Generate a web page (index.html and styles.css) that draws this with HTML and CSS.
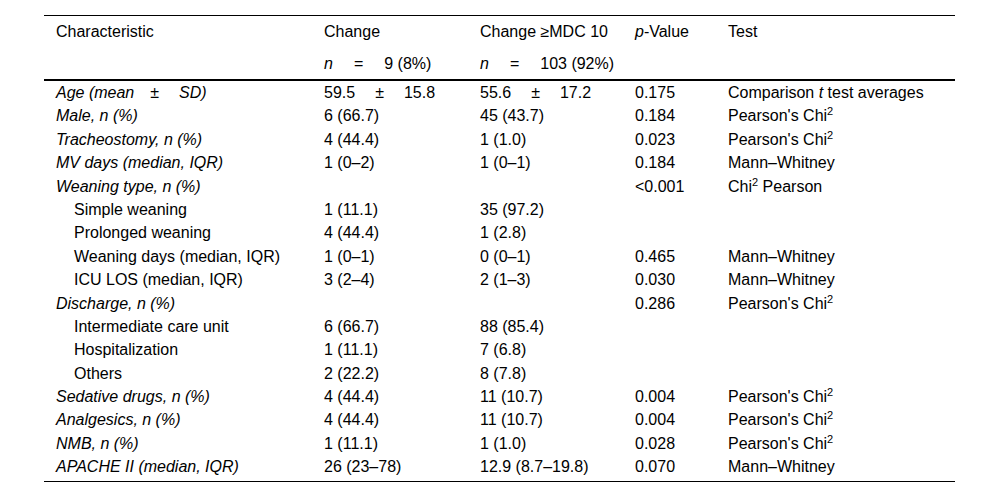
FILE: index.html
```html
<!DOCTYPE html>
<html lang="en">
<head>
<meta charset="utf-8">
<title>Characteristics table</title>
<link rel="stylesheet" href="styles.css">
</head>
<body>
<table class="data">
  <colgroup>
    <col class="c1"><col class="c2"><col class="c3"><col class="c4"><col class="c5">
  </colgroup>
  <thead>
    <tr class="h1">
      <th>Characteristic</th>
      <th>Change</th>
      <th>Change ≥MDC 10</th>
      <th><i>p</i>-Value</th>
      <th>Test</th>
    </tr>
    <tr class="h2">
      <th></th>
      <th><i>n</i><span class="eq">=</span>9 (8%)</th>
      <th><i>n</i><span class="eq">=</span>103 (92%)</th>
      <th></th>
      <th></th>
    </tr>
  </thead>
  <tbody>
    <tr><td class="lab">Age (mean<span class="pm1">±</span>SD)</td><td>59.5<span class="pm">±</span>15.8</td><td>55.6<span class="pm">±</span>17.2</td><td>0.175</td><td>Comparison <i>t</i> test averages</td></tr>
    <tr><td class="lab">Male, n (%)</td><td>6 (66.7)</td><td>45 (43.7)</td><td>0.184</td><td>Pearson's Chi<sup>2</sup></td></tr>
    <tr><td class="lab">Tracheostomy, n (%)</td><td>4 (44.4)</td><td>1 (1.0)</td><td>0.023</td><td>Pearson's Chi<sup>2</sup></td></tr>
    <tr><td class="lab">MV days (median, IQR)</td><td>1 (0–2)</td><td>1 (0–1)</td><td>0.184</td><td>Mann–Whitney</td></tr>
    <tr><td class="lab">Weaning type, n (%)</td><td></td><td></td><td>&lt;0.001</td><td>Chi<sup>2</sup> Pearson</td></tr>
    <tr><td class="sub">Simple weaning</td><td>1 (11.1)</td><td>35 (97.2)</td><td></td><td></td></tr>
    <tr><td class="sub">Prolonged weaning</td><td>4 (44.4)</td><td>1 (2.8)</td><td></td><td></td></tr>
    <tr><td class="sub">Weaning days (median, IQR)</td><td>1 (0–1)</td><td>0 (0–1)</td><td>0.465</td><td>Mann–Whitney</td></tr>
    <tr><td class="sub">ICU LOS (median, IQR)</td><td>3 (2–4)</td><td>2 (1–3)</td><td>0.030</td><td>Mann–Whitney</td></tr>
    <tr><td class="lab">Discharge, n (%)</td><td></td><td></td><td>0.286</td><td>Pearson's Chi<sup>2</sup></td></tr>
    <tr><td class="sub">Intermediate care unit</td><td>6 (66.7)</td><td>88 (85.4)</td><td></td><td></td></tr>
    <tr><td class="sub">Hospitalization</td><td>1 (11.1)</td><td>7 (6.8)</td><td></td><td></td></tr>
    <tr><td class="sub">Others</td><td>2 (22.2)</td><td>8 (7.8)</td><td></td><td></td></tr>
    <tr><td class="lab">Sedative drugs, n (%)</td><td>4 (44.4)</td><td>11 (10.7)</td><td>0.004</td><td>Pearson's Chi<sup>2</sup></td></tr>
    <tr><td class="lab">Analgesics, n (%)</td><td>4 (44.4)</td><td>11 (10.7)</td><td>0.004</td><td>Pearson's Chi<sup>2</sup></td></tr>
    <tr><td class="lab">NMB, n (%)</td><td>1 (11.1)</td><td>1 (1.0)</td><td>0.028</td><td>Pearson's Chi<sup>2</sup></td></tr>
    <tr class="last"><td class="lab">APACHE II (median, IQR)</td><td>26 (23–78)</td><td>12.9 (8.7–19.8)</td><td>0.070</td><td>Mann–Whitney</td></tr>
  </tbody>
</table>
</body>
</html>
```
FILE: styles.css
```css
html, body {
  margin: 0;
  padding: 0;
  background: #fff;
}
body {
  font-family: "Liberation Sans", Arial, sans-serif;
  font-size: 16px;
  color: #000;
}
.data {
  margin: 15px 0 0 44px;
  width: 911px;
  border-collapse: collapse;
  table-layout: fixed;
  border-top: 1px solid #000;
  border-bottom: 1px solid #000;
}
.c1 { width: 268px; }
.c2 { width: 156px; }
.c3 { width: 155px; }
.c4 { width: 93px; }
.c5 { width: 239px; }
th, td {
  text-align: left;
  font-weight: normal;
  white-space: nowrap;
  padding: 3px 12px 2.4px;
  line-height: 18px;
  vertical-align: middle;
}
thead th {
  padding-top: 7px;
  padding-bottom: 6.5px;
}
.h2 th {
  border-bottom: 2px solid #000;
}
.last td {
  padding-bottom: 5px;
}
.lab { font-style: italic; }
.sub { padding-left: 30px; }
.eq { margin: 0 21px; }
.pm { margin: 0 20px; }
.pm1 { margin: 0 20px 0 16px; }
sup {
  font-size: 11px;
  line-height: 0;
  vertical-align: 6px;
}
```
